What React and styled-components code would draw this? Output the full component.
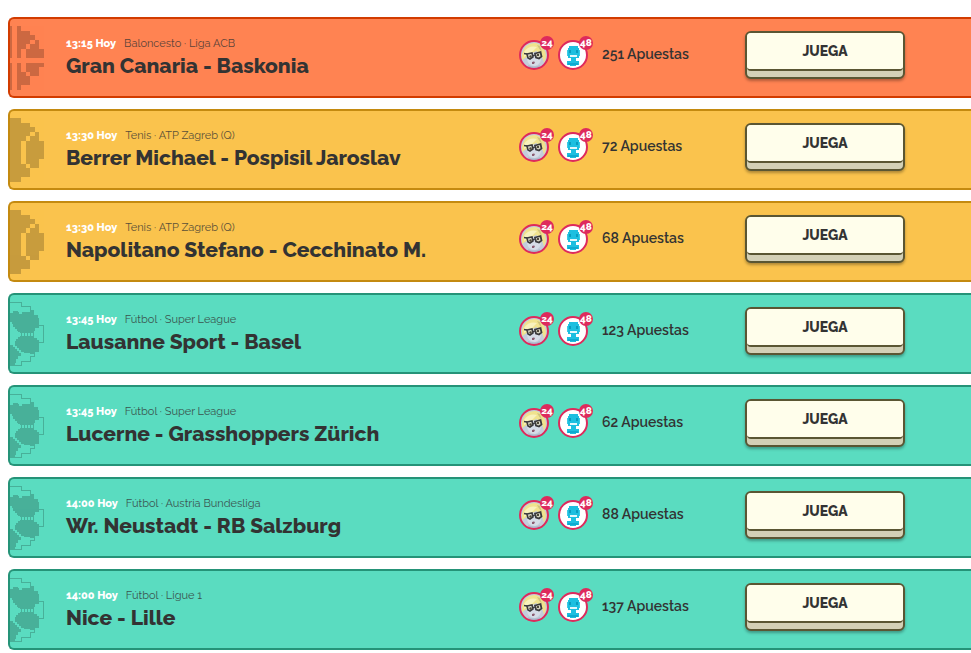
import React from 'react'
import styled, { createGlobalStyle } from 'styled-components'

const GlobalStyle = createGlobalStyle`
    body{
        margin: 0;
        background: #fff;
        color: #333;
        font-family: Raleway, 'Open Sans', sans-serif;
    }
`

const themes = {
    basket: { background: '#ff8352', border: '#d23c00' },
    tennis: { background: '#fac34d', border: '#c48a10' },
    soccer: { background: '#5adcc0', border: '#259378' },
}

const EventList = styled.ul`
    display: flex;
    flex-direction: column;
    gap: 11px;
    margin: 0;
    padding: 17px 0 3px 8px;
    list-style: none;
`

const EventRow = styled.li`
    display: flex;
    align-items: flex-start;
    height: 77px;
    padding-right: 66px;
    overflow: hidden;
    background: ${({ $sport }) => themes[$sport].background};
    border: 2px solid ${({ $sport }) => themes[$sport].border};
    border-right: 0;
    border-radius: 6px 0 0 6px;
`

const SportIcon = styled.div`
    display: flex;
    flex: none;
    justify-content: flex-end;
    width: 34px;
    margin: 7px 22px 0 0;
    overflow: hidden;
    svg{
        flex: none;
        fill: #000;
        opacity: 0.2;
    }
`

const Info = styled.div`
    flex: 1;
    min-width: 0;
    padding-top: 17px;
`

const Meta = styled.p`
    display: flex;
    gap: 8px;
    margin: 0;
    font-size: 11px;
    font-weight: 400;
    line-height: 16px;
    white-space: nowrap;
    time{
        color: #fff;
        font-weight: 800;
    }
    span{
        opacity: 0.8;
    }
`

const Teams = styled.h3`
    margin: 0;
    font-size: 21px;
    font-weight: 800;
    line-height: 28px;
    white-space: nowrap;
`

const Players = styled.div`
    display: flex;
    flex: none;
    gap: 9px;
    padding-top: 21px;
`

const Avatar = styled.div`
    position: relative;
    width: 30px;
    height: 30px;
    svg{
        display: block;
    }
`

const Level = styled.span`
    position: absolute;
    top: -4px;
    right: -5px;
    width: 14px;
    height: 14px;
    border-radius: 50%;
    background: #de2a5c;
    color: #fff;
    font-size: 10px;
    font-weight: 800;
    line-height: 14px;
    text-align: center;
`

const Bets = styled.p`
    flex: none;
    width: 143px;
    margin: 0 0 0 14px;
    padding-top: 25px;
    font-size: 14px;
    font-weight: 600;
    line-height: 20px;
`

const PlayButton = styled.button`
    flex: none;
    width: 160px;
    height: 48px;
    margin: 12px 0 0;
    padding: 0;
    border: 2px solid #5a5633;
    border-radius: 6px;
    background: #d3d0b6;
    box-shadow: 0 2px 3px rgba(0, 0, 0, 0.3);
    color: #333;
    font-family: inherit;
    font-size: 14px;
    font-weight: 800;
    cursor: pointer;
    span{
        display: block;
        height: 36px;
        margin-bottom: 6px;
        border-bottom: 2px solid #5a5633;
        border-radius: 4px;
        background: #fffeeb;
        line-height: 36px;
    }
`

// 14x14 cell drawings, only the right half is ever visible
const pixels = {
    basket: [
        '#.#.....',
        '#.###...',
        '#.####..',
        '#.###.#.',
        '#.##.##.',
        '#.#.####',
        '#.#.####',
        '........',
        '#.#.####',
        '#.#.###.',
        '#.##.##.',
        '#.###...',
        '#.###...',
        '#.#.....',
    ],
    tennis: [
        '###.....',
        '#####...',
        '######..',
        '#####.#.',
        '####.##.',
        '###.####',
        '###.####',
        '###.####',
        '###.####',
        '###.###.',
        '####.##.',
        '#####...',
        '#####...',
        '###.....',
    ],
}

function PixelBall({ rows }) {
    return (
        <svg width="64" height="64" viewBox="0 0 14 14" shapeRendering="crispEdges" aria-hidden="true">
            {rows.map((row, y) =>
                row.split('').map((cell, x) => cell === '#' && <rect key={`${x}-${y}`} x={x + 6} y={y} width="1" height="1" />)
            )}
        </svg>
    )
}

function SoccerBall() {
    return (
        <svg width="34" height="64" viewBox="0 0 34 64" shapeRendering="crispEdges" aria-hidden="true">
            <path d="M0 0H12V4H21V9H20V5H11V1H0Z" />
            <path d="M29 23H34V41H29V40H33V24H29Z" />
            <path d="M25 50V55H21V60H12V64H0V63H11V59H20V54H24V50Z" />
            <path d="M3 9H8V10H9V12H12V10H20V8H24V13H28V16H29V26H25V29H24V31H10V30H8V29H7V27H5V25H3V22H2V20H0V11H3Z" />
            <path d="M10 34H24V36H27V38H29V50H25V52H20V51H14V50H11V48H9V46H7V44H5V39H6V37H8V35H10Z" />
            <path d="M11 31H12V34H11ZM14 31H15V34H14ZM17 31H18V34H17ZM20 31H21V34H20ZM23 31H24V34H23Z" />
            <path d="M0 43H3V45H5V47H7V49H9V51H11V54H8V57H6V61H5V63H0Z" />
        </svg>
    )
}

function Pony() {
    return (
        <svg width="30" height="30" viewBox="0 0 30 30" aria-hidden="true">
            <circle cx="15" cy="15" r="14" fill="#c3cddb" />
            <path d="M3 14Q6 2 17 3Q27 6 27 17L25 23Q23 13 17 11L3 20Z" fill="#f0e38e" />
            <path d="M5 12Q10 5 18 7L13 12L5 17Z" fill="#f8f2bd" />
            <path d="M8 15Q14 11 20 13L22 18Q22 24 16 26Q9 26 8 19Z" fill="#d6dde8" />
            <path d="M18 5Q20 9 23 12L21 6Z" fill="#cfc37e" />
            <path d="M8 14L13 13L14 17L11 19L9 18Z" fill="#e4e3cf" stroke="#3a3a3c" strokeWidth="1.6" />
            <path d="M16 13.5L21.5 12L22.5 16.5L20 18.5L17 17.5Z" fill="#e4e3cf" stroke="#3a3a3c" strokeWidth="1.8" />
            <path d="M13 15L14.5 15.5L16 15M5 13.5L8 14" fill="none" stroke="#3a3a3c" strokeWidth="1.3" />
            <circle cx="11.5" cy="16.5" r="1.2" fill="#4a4638" />
            <circle cx="19" cy="15" r="1.2" fill="#4a4638" />
            <path d="M13 22Q15 21 16 22L15 24H13Z" fill="#8c5d72" />
            <path d="M9 25Q15 28 21 25L20 28H10Z" fill="#aab8cb" />
            <circle cx="15" cy="15" r="14" fill="none" stroke="#de2a5c" strokeWidth="2" />
        </svg>
    )
}

function Robot() {
    return (
        <svg width="30" height="30" viewBox="0 0 30 30" aria-hidden="true">
            <circle cx="15" cy="15" r="14" fill="#fff" stroke="#de2a5c" strokeWidth="2" />
            <path d="M11 6H20V8H21V18H18V21H21V25H18V26H12V25H9V21H13V18H10V8H11Z" fill="#1dbfe0" />
            <path d="M9 10H10V16H9ZM21 10H22V16H21Z" fill="#3ccbe6" />
            <path d="M11 10H13V13H11ZM18 10H20V13H18Z" fill="#0a9cbf" />
            <path d="M12 15H19V17H12Z" fill="#e3f8fc" />
            <path d="M10 23H20V25H10Z" fill="#0faad0" />
        </svg>
    )
}

const events = [
    { sport: 'basket', time: '13:15', league: 'Baloncesto · Liga ACB', teams: 'Gran Canaria - Baskonia', bets: 251 },
    { sport: 'tennis', time: '13:30', league: 'Tenis · ATP Zagreb (Q)', teams: 'Berrer Michael - Pospisil Jaroslav', bets: 72 },
    { sport: 'tennis', time: '13:30', league: 'Tenis · ATP Zagreb (Q)', teams: 'Napolitano Stefano - Cecchinato M.', bets: 68 },
    { sport: 'soccer', time: '13:45', league: 'Fútbol · Super League', teams: 'Lausanne Sport - Basel', bets: 123 },
    { sport: 'soccer', time: '13:45', league: 'Fútbol · Super League', teams: 'Lucerne - Grasshoppers Zürich', bets: 62 },
    { sport: 'soccer', time: '14:00', league: 'Fútbol · Austria Bundesliga', teams: 'Wr. Neustadt - RB Salzburg', bets: 88 },
    { sport: 'soccer', time: '14:00', league: 'Fútbol · Ligue 1', teams: 'Nice - Lille', bets: 137 },
]

export default function App() {
    return (
        <>
            <GlobalStyle />
            <EventList>
                {events.map(({ sport, time, league, teams, bets }) => (
                    <EventRow key={teams} $sport={sport}>
                        <SportIcon>
                            {sport === 'soccer' ? <SoccerBall /> : <PixelBall rows={pixels[sport]} />}
                        </SportIcon>
                        <Info>
                            <Meta>
                                <time dateTime={time}>{time} Hoy</time>
                                <span>{league}</span>
                            </Meta>
                            <Teams>{teams}</Teams>
                        </Info>
                        <Players>
                            <Avatar>
                                <Pony />
                                <Level>24</Level>
                            </Avatar>
                            <Avatar>
                                <Robot />
                                <Level>48</Level>
                            </Avatar>
                        </Players>
                        <Bets>{bets} Apuestas</Bets>
                        <PlayButton type="button">
                            <span>JUEGA</span>
                        </PlayButton>
                    </EventRow>
                ))}
            </EventList>
        </>
    )
}
